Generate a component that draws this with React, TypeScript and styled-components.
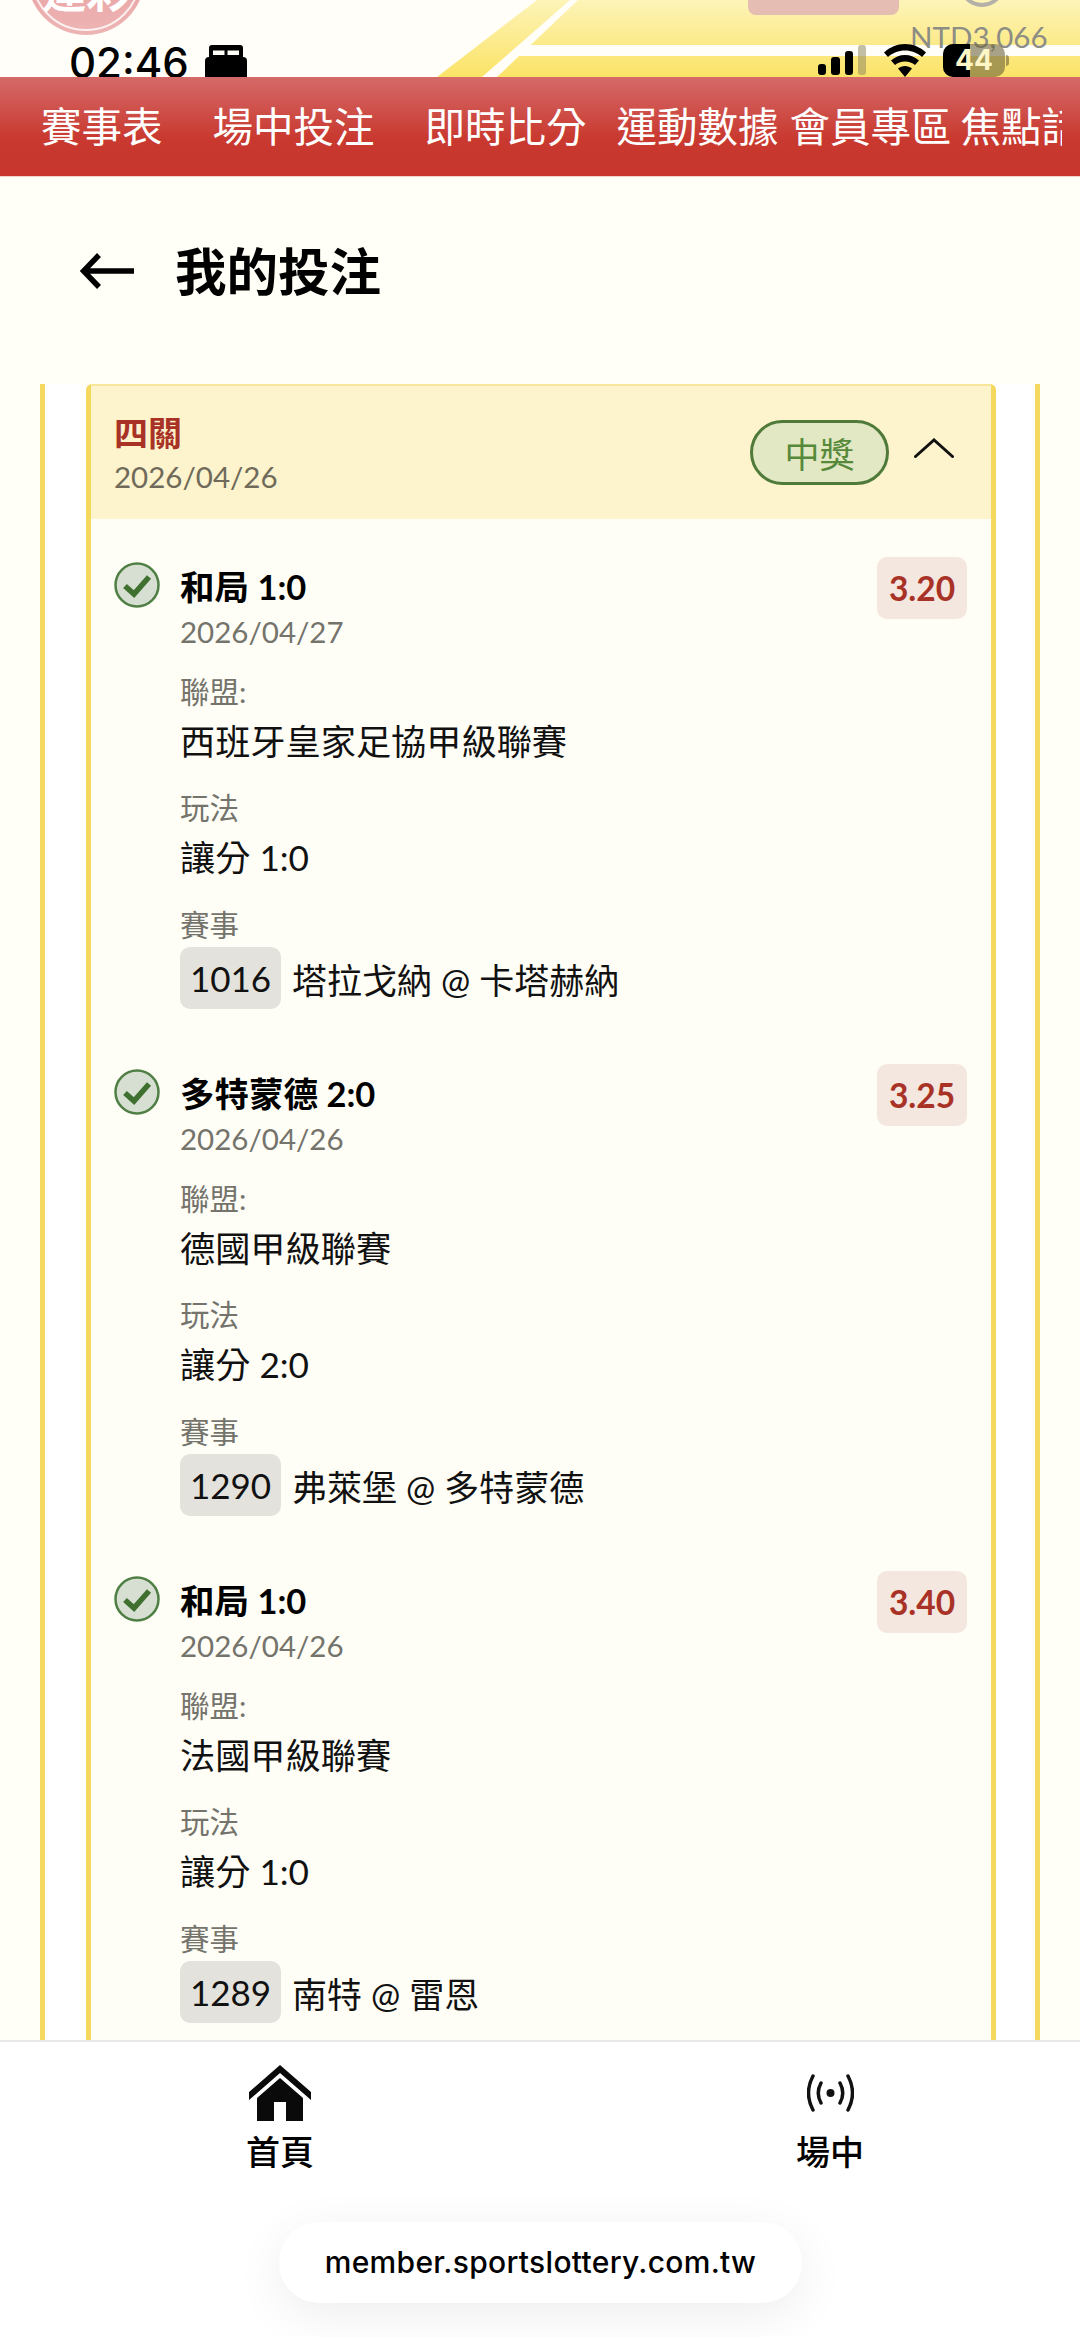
import React from 'react';
import styled, { createGlobalStyle } from 'styled-components';

const GlobalStyle = createGlobalStyle`
  html, body {
    margin: 0;
    padding: 0;
    background: #fffef7;
  }
  * {
    box-sizing: border-box;
  }
`;

const Page = styled.div`
  width: 1080px;
  height: 2337px;
  display: flex;
  flex-direction: column;
  overflow: hidden;
  background: #fffef7;
  color: #000;
  font-family: Lato, 'Noto Sans CJK TC', sans-serif;
`;

const Banner = styled.div`
  position: relative;
  height: 77px;
  flex: none;
  overflow: hidden;
  background: #fffef9;
`;

const BannerArt = styled.svg`
  position: absolute;
  inset: 0;
`;

const Balance = styled.div`
  position: absolute;
  top: 19px;
  left: 910px;
  font-size: 29.5px;
  line-height: 36px;
  color: #8d8d86;
`;

const StatusBar = styled.div`
  position: absolute;
  inset: 0;
  display: flex;
  justify-content: space-between;
  align-items: flex-start;
  padding: 44px 71px 0 69px;
`;

const StatusLeft = styled.div`
  display: flex;
  gap: 15px;
`;

const Clock = styled.div`
  font-family: Inter, sans-serif;
  font-size: 42px;
  font-weight: 500;
  line-height: 38px;
`;

const StatusRight = styled.div`
  display: flex;
  align-items: flex-start;
  gap: 17px;
`;

const BatteryWrap = styled.div`
  display: flex;
  align-items: center;
  gap: 1px;
`;

const Battery = styled.div`
  position: relative;
  width: 62px;
  height: 33px;
  border-radius: 10px;
  overflow: hidden;
  background: rgba(110, 100, 60, 0.6);
  color: #fff6c8;
  font-family: Inter, sans-serif;
  font-size: 28px;
  font-weight: 700;
  line-height: 33px;
  text-align: center;

  &::before {
    content: '';
    position: absolute;
    inset: 0 35px 0 0;
    background: #000;
    z-index: 0;
  }
`;

const BatteryNub = styled.div`
  width: 3px;
  height: 11px;
  border-radius: 0 3px 3px 0;
  background: rgba(110, 100, 60, 0.6);
`;

const BatteryText = styled.span`
  position: relative;
`;

const Nav = styled.nav`
  height: 100px;
  flex: none;
  display: flex;
  align-items: center;
  padding: 0 18px 0 41px;
  background: linear-gradient(#d56a69 0%, #c9392f 62%, #c7352c 100%);
  border-bottom: 1px solid #f3d3c7;
`;

const NavTrack = styled.div`
  display: flex;
  width: 100%;
  overflow: hidden;
  white-space: nowrap;
`;

const NavItem = styled.div<{ $gap: number }>`
  flex: none;
  margin-right: ${p => p.$gap}px;
  font-size: 40.5px;
  line-height: 58px;
  color: #fff;
`;

const TitleRow = styled.div`
  height: 207px;
  flex: none;
  display: flex;
  align-items: center;
  gap: 41px;
  padding: 0 0 20px 80px;
`;

const PageTitle = styled.h1`
  margin: 0;
  font-size: 51.5px;
  font-weight: 700;
  line-height: 70px;
`;

const Scroll = styled.main`
  flex: 1;
  min-height: 0;
  overflow: hidden;
  padding: 0 40px;
`;

const OuterCard = styled.div`
  background: #fff;
  border-left: 5px solid #f5d95f;
  border-right: 5px solid #f5d95f;
  padding: 0 39px 0 41px;
`;

const BetCard = styled.section`
  background: #fffef6;
  border-left: 5px solid #f5d95f;
  border-right: 5px solid #f5d95f;
  border-radius: 6px 6px 0 0;
`;

const BetHeader = styled.header`
  height: 135px;
  display: flex;
  align-items: center;
  justify-content: space-between;
  padding: 0 37px 0 23px;
  background: #fdf3cc;
  border-top: 2px solid #f8e69a;
`;

const BetName = styled.div`
  font-size: 34px;
  font-weight: 700;
  line-height: 48px;
  color: #a93226;
`;

const BetDate = styled.div`
  font-size: 29.5px;
  line-height: 40px;
  color: #6f6a5a;
`;

const HeaderRight = styled.div`
  display: flex;
  align-items: center;
  gap: 25px;
`;

const StatusBadge = styled.div`
  width: 139px;
  height: 65px;
  display: flex;
  align-items: center;
  justify-content: center;
  border: 3px solid #4f7a3a;
  border-radius: 33px;
  background: #e3e8c4;
  color: #568a3a;
  font-size: 35px;
`;

const Chevron = styled.svg`
  margin-bottom: 9px;
`;

const LegList = styled.div`
  display: flex;
  flex-direction: column;
  gap: 55px;
  padding: 38px 24px 60px 23px;
`;

const Leg = styled.article`
  display: grid;
  grid-template-columns: 66px 1fr auto;
  align-items: start;
`;

const CheckMark = styled.svg`
  margin-top: 5px;
`;

const LegBody = styled.div`
  display: flex;
  flex-direction: column;
`;

const Pick = styled.div`
  font-size: 34.5px;
  font-weight: 700;
  line-height: 60px;
`;

const LegDate = styled.div`
  font-size: 29.5px;
  line-height: 30px;
  color: #74736c;
`;

const Field = styled.div<{ $top: number }>`
  margin-top: ${p => p.$top}px;
`;

const FieldLabel = styled.div`
  font-size: 29.5px;
  line-height: 40px;
  color: #74736c;
`;

const FieldValue = styled.div`
  font-size: 35.2px;
  line-height: 58px;
  color: #111;
`;

const MatchRow = styled.div`
  display: flex;
  align-items: center;
  gap: 11px;
  margin-top: 2px;
  font-size: 35px;
  color: #111;
`;

const MatchCode = styled.span`
  width: 101px;
  height: 62px;
  display: flex;
  align-items: center;
  justify-content: center;
  border-radius: 10px;
  background: #e3e2dc;
`;

const Odds = styled.div`
  width: 90px;
  height: 62px;
  display: flex;
  align-items: center;
  justify-content: center;
  border-radius: 10px;
  background: #f4e7e0;
  color: #a93226;
  font-size: 33.5px;
  font-weight: 700;
`;

const Footer = styled.footer`
  height: 297px;
  flex: none;
  display: flex;
  flex-direction: column;
  background: #fff;
  border-top: 2px solid #e8e8e6;
`;

const Tabs = styled.div`
  display: flex;
  gap: 310px;
  padding: 22px 0 0 160px;
`;

const Tab = styled.div`
  width: 240px;
  display: flex;
  flex-direction: column;
  align-items: center;
`;

const TabIconSlot = styled.div`
  height: 58px;
  display: flex;
  align-items: center;
  justify-content: center;
`;

const TabLabel = styled.div`
  margin-top: 6px;
  font-size: 34px;
  font-weight: 500;
  line-height: 48px;
`;

const UrlPill = styled.div`
  width: 523px;
  height: 81px;
  margin: 46px 0 0 279px;
  padding-bottom: 2px;
  display: flex;
  align-items: center;
  justify-content: center;
  border-radius: 40px;
  background: #fff;
  box-shadow: 0 12px 50px rgba(0, 0, 0, 0.07);
  font-family: Inter, sans-serif;
  font-size: 30px;
  font-weight: 500;
  letter-spacing: 0.3px;
`;

const Sky = () => (
  <BannerArt width={1080} height={77} viewBox="0 0 1080 77">
    <defs>
      <linearGradient id="sun" x1="0" y1="0" x2="0" y2="1">
        <stop offset="0" stopColor="#fdf4b8" />
        <stop offset="1" stopColor="#fbe367" />
      </linearGradient>
      <linearGradient id="seal" x1="0" y1="0" x2="0" y2="1">
        <stop offset="0" stopColor="#e28e8e" />
        <stop offset="1" stopColor="#eeb5b5" />
      </linearGradient>
    </defs>
    <polygon points="437,77 537,0 1080,0 1080,77" fill="url(#sun)" />
    <polygon points="482,77 570,0 578,0 497,77" fill="#fffef9" />
    <polygon points="527,45 1080,45 1080,56 516,56" fill="#fffef9" />
    <circle cx="86" cy="-24" r="59" fill="url(#seal)" />
    <circle cx="86" cy="-24" r="54" fill="none" stroke="#fff" strokeWidth="2" opacity="0.8" />
    <text x="86" y="8" textAnchor="middle" fontSize="44" fontWeight="700" fill="#fff" fontFamily="'Noto Sans CJK TC', sans-serif">運彩</text>
    <rect x="748" y="-20" width="151" height="35" rx="8" fill="#e5bdb2" />
    <circle cx="982" cy="-16" r="21" fill="none" stroke="#b4b2a8" strokeWidth="4" />
  </BannerArt>
);

const BedIcon = () => (
  <svg width="44" height="34" viewBox="0 0 44 34">
    <path
      fillRule="evenodd"
      d="M5 13V4Q5 1 8 1H36Q39 1 39 4V13ZM9 6.500V11H20.500V6.500ZM23.500 6.500V11H35V6.500Z"
      fill="#000"
    />
    <path d="M1 17Q1 13 5 13H39Q43 13 43 17V34H1Z" fill="#000" />
  </svg>
);

const SignalIcon = () => (
  <svg width="50" height="33" viewBox="0 0 50 33">
    <rect x="1" y="20" width="8" height="11" rx="3" fill="#000" />
    <rect x="14" y="13" width="9" height="18" rx="3" fill="#000" />
    <rect x="28" y="7" width="8" height="24" rx="3" fill="#000" />
    <rect x="41" y="1" width="8" height="30" rx="3" fill="#8f8a62" opacity="0.55" />
  </svg>
);

const WifiIcon = () => (
  <svg width="42" height="33" viewBox="0 0 42 33">
    <path d="M21 0C13 0 6 3 0 8.500L4 13C8.500 9 14.500 6.500 21 6.500S33.500 9 38 13L42 8.500C36 3 29 0 21 0Z" fill="#000" />
    <path d="M21 11C15.500 11 11 13 7 16.500L11 21C13.500 18.800 17 17.500 21 17.500S28.500 18.800 31 21L35 16.500C31 13 26.500 11 21 11Z" fill="#000" />
    <path d="M21 22C18.500 22 16 23 14 24.500L21 33L28 24.500C26 23 23.500 22 21 22Z" fill="#000" />
  </svg>
);

const BackArrow = () => (
  <svg width="54" height="36" viewBox="0 0 54 36">
    <path d="M54 18H5M19 2L3.500 18L19 34" fill="none" stroke="#000" strokeWidth="5.500" />
  </svg>
);

const ChevronUp = () => (
  <Chevron width="40" height="20" viewBox="0 0 40 20">
    <path d="M1.500 18.500L20 2L38.500 18.500" fill="none" stroke="#111" strokeWidth="3" strokeLinecap="round" />
  </Chevron>
);

const CheckIcon = () => (
  <CheckMark width="46" height="46" viewBox="0 0 46 46">
    <circle cx="23" cy="23" r="21.500" fill="#d6dfd1" stroke="#4f7f45" strokeWidth="2.500" />
    <path d="M11 24L20 32L35 15" fill="none" stroke="#3f702f" strokeWidth="5.500" />
  </CheckMark>
);

const HomeIcon = () => (
  <svg width="62" height="56" viewBox="0 0 62 56">
    <path d="M31 0L62 27V35L31 8L0 35V27Z" fill="#0a0a0a" />
    <path d="M31 13L54 33V56H37V37H25V56H8V33Z" fill="#0a0a0a" />
  </svg>
);

const LiveIcon = () => (
  <svg width="47" height="38" viewBox="0 0 47 38">
    <circle cx="23.500" cy="19" r="4" fill="#111" />
    <path d="M14 9Q8.500 19 14 29M33 9Q38.500 19 33 29M6 2Q-3 19 6 36M41 2Q50 19 41 36" fill="none" stroke="#111" strokeWidth="3.500" strokeLinecap="round" />
  </svg>
);

const navItems = [
  { label: '賽事表', gap: 50 },
  { label: '場中投注', gap: 50 },
  { label: '即時比分', gap: 30 },
  { label: '運動數據', gap: 11 },
  { label: '會員專區', gap: 9 },
  { label: '焦點話題', gap: 0 },
];

const legs = [
  { pick: '和局 1:0', date: '2026/04/27', odds: '3.20', league: '西班牙皇家足協甲級聯賽', play: '讓分 1:0', code: '1016', match: '塔拉戈納 @ 卡塔赫納' },
  { pick: '多特蒙德 2:0', date: '2026/04/26', odds: '3.25', league: '德國甲級聯賽', play: '讓分 2:0', code: '1290', match: '弗萊堡 @ 多特蒙德' },
  { pick: '和局 1:0', date: '2026/04/26', odds: '3.40', league: '法國甲級聯賽', play: '讓分 1:0', code: '1289', match: '南特 @ 雷恩' },
];

const App: React.FC = () => (
  <Page>
    <GlobalStyle />
    <Banner>
      <Sky />
      <Balance>NTD3,066</Balance>
      <StatusBar>
        <StatusLeft>
          <Clock>02:46</Clock>
          <BedIcon />
        </StatusLeft>
        <StatusRight>
          <SignalIcon />
          <WifiIcon />
          <BatteryWrap>
            <Battery>
              <BatteryText>44</BatteryText>
            </Battery>
            <BatteryNub />
          </BatteryWrap>
        </StatusRight>
      </StatusBar>
    </Banner>

    <Nav>
      <NavTrack>
        {navItems.map(item => (
          <NavItem key={item.label} $gap={item.gap}>{item.label}</NavItem>
        ))}
      </NavTrack>
    </Nav>

    <TitleRow>
      <BackArrow />
      <PageTitle>我的投注</PageTitle>
    </TitleRow>

    <Scroll>
      <OuterCard>
        <BetCard>
          <BetHeader>
            <div>
              <BetName>四關</BetName>
              <BetDate>2026/04/26</BetDate>
            </div>
            <HeaderRight>
              <StatusBadge>中獎</StatusBadge>
              <ChevronUp />
            </HeaderRight>
          </BetHeader>

          <LegList>
            {legs.map(leg => (
              <Leg key={leg.code}>
                <CheckIcon />
                <LegBody>
                  <Pick>{leg.pick}</Pick>
                  <LegDate>{leg.date}</LegDate>
                  <Field $top={25}>
                    <FieldLabel>聯盟:</FieldLabel>
                    <FieldValue>{leg.league}</FieldValue>
                  </Field>
                  <Field $top={18}>
                    <FieldLabel>玩法</FieldLabel>
                    <FieldValue>{leg.play}</FieldValue>
                  </Field>
                  <Field $top={19}>
                    <FieldLabel>賽事</FieldLabel>
                    <MatchRow>
                      <MatchCode>{leg.code}</MatchCode>
                      {leg.match}
                    </MatchRow>
                  </Field>
                </LegBody>
                <Odds>{leg.odds}</Odds>
              </Leg>
            ))}
          </LegList>
        </BetCard>
      </OuterCard>
    </Scroll>

    <Footer>
      <Tabs>
        <Tab>
          <TabIconSlot><HomeIcon /></TabIconSlot>
          <TabLabel>首頁</TabLabel>
        </Tab>
        <Tab>
          <TabIconSlot><LiveIcon /></TabIconSlot>
          <TabLabel>場中</TabLabel>
        </Tab>
      </Tabs>
      <UrlPill>member.sportslottery.com.tw</UrlPill>
    </Footer>
  </Page>
);

export default App;
